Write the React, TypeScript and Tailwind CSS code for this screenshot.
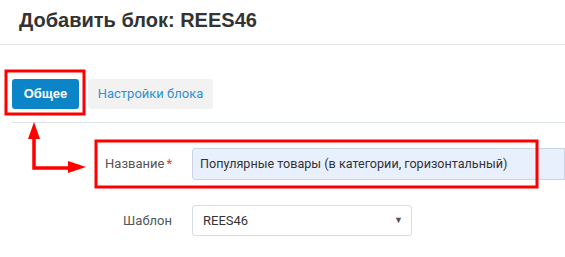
import React from 'react';

const Annotations = () => (
  <svg className="absolute inset-0 pointer-events-none" width={565} height={257} viewBox="0 0 565 257">
    <rect x={6} y={71} width={78} height={43} fill="none" stroke="#f00" strokeWidth={3} />
    <rect x={96} y={141} width={441} height={46} fill="none" stroke="#f00" strokeWidth={3} />
    <path d="M34 138 V168 H70" fill="none" stroke="#f00" strokeWidth={3.5} />
    <polygon points="34,122 28,139 40,139" fill="#f00" />
    <polygon points="86,167 68,161 68,173" fill="#f00" />
  </svg>
);

export default function App() {
  return (
    <div className="relative w-[565px] h-[257px] overflow-hidden bg-white font-['Liberation_Sans',Arial,sans-serif]">
      <div className="h-[45px] border-b border-[#e6e6e6] pl-[19px] pt-[7px]">
        <h1 className="text-[20px] font-bold text-[#333] leading-[27px]">Добавить блок: REES46</h1>
      </div>

      <div className="pl-[12px] pt-[34px]">
        <div className="flex gap-[9px]">
          <button className="h-[30px] w-[67px] rounded-[3px] bg-[#0b85c8] text-white text-[13px] font-bold">Общее</button>
          <button className="h-[30px] w-[125px] rounded-[3px] bg-[#f2f2f2] text-[#3390d2] text-[13px] font-['Roboto',sans-serif]">Настройки блока</button>
        </div>
        <div className="mt-[13px] border-b border-[#dde4ea]" />
      </div>

      <div className="font-['Roboto',sans-serif] text-[13px]">
        <div className="flex items-center mt-[25px] h-[32px]">
          <div className="w-[176px] text-right pr-[4px] text-[#555]">
            Название<span className="text-[#e33] ml-[2px]">*</span>
          </div>
          <div className="ml-[16px] flex-1 h-[32px] bg-[#e8f0fe] border border-[#c9d5e2] rounded-l-[3px] pl-[7px] flex items-center text-[#333] text-[12.6px]">
            Популярные товары (в категории, горизонтальный)
          </div>
        </div>

        <div className="mt-[25px] flex items-center h-[31px]">
          <div className="w-[172px] text-right text-[#555]">Шаблон</div>
          <div className="ml-[20px] w-[220px] h-[31px] bg-white border border-[#d5dde6] rounded-[3px] pl-[10px] pr-[8px] flex items-center justify-between text-[#333]">
            <span>REES46</span>
            <span className="text-[9px] text-[#555]">▼</span>
          </div>
        </div>
      </div>

      <Annotations />
    </div>
  );
}
